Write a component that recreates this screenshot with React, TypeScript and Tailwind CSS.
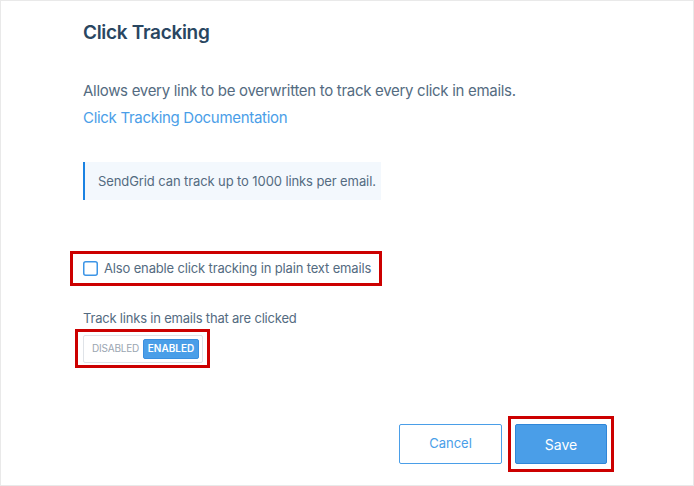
export default function App() {
  return (
    <div
      className="flex h-[486px] w-[694px] flex-col border border-[#e9e9e9] bg-white pl-[82px] text-[#546b81]"
      style={{ fontFamily: 'Inter, "Noto Sans", sans-serif' }}
    >
      <h1 className="mt-[19px] text-[19px] leading-[26px] font-semibold tracking-[-0.3px] text-[#294661]">
        Click Tracking
      </h1>

      <p className="mt-[35px] text-[15px] leading-[20px] tracking-[-0.3px]">
        Allows every link to be overwritten to track every click in emails.
      </p>
      <a className="mt-[7px] text-[15px] leading-[20px] tracking-[-0.3px] text-[#4a9ee8]" href="#">
        Click Tracking Documentation
      </a>

      <div className="mt-[34px] w-[298px] border-l-2 border-[#1a82e2] bg-[#f3f8fd] py-[10px] pl-[13px] text-[13px] leading-[18px] tracking-[-0.1px]">
        SendGrid can track up to 1000 links per email.
      </div>

      {/* checkbox, outlined in red */}
      <div className="mt-[51px] -ml-[13px] flex h-[35px] w-[312px] items-center gap-[6px] border-[3px] border-[#cc0000] pl-[10px]">
        <svg className="h-[15px] w-[15px] shrink-0" viewBox="0 0 15 15">
          <rect x="0.75" y="0.75" width="13.5" height="13.5" rx="2" fill="#fff" stroke="#3d95e6" strokeWidth="1.5" />
        </svg>
        <span className="text-[13px] leading-[17px] tracking-[-0.15px]">Also enable click tracking in plain text emails</span>
      </div>

      <p className="mt-[24px] text-[13px] leading-[17px] tracking-[-0.2px]">Track links in emails that are clicked</p>

      <div className="mt-[2px] -ml-[8px] flex h-[39px] w-[135px] items-center border-[3px] border-[#cc0000] pl-[5px]">
        <div className="flex h-[28px] w-[120px] items-center rounded-[2px] border border-[#dfe3e8] bg-white pl-[8px] pr-[3px]">
          <span className="text-[10px] tracking-[-0.2px] text-[#9aa5b1]">DISABLED</span>
          <span className="ml-auto flex h-[20px] w-[56px] items-center justify-center rounded-[2px] border border-[#3a8fdf] bg-[#4a9ee8] text-[10px] font-semibold text-white">
            ENABLED
          </span>
        </div>
      </div>

      <div className="mt-auto mb-[13px] flex items-center justify-end gap-[6px] pr-[79px]">
        <button
          type="button"
          className="h-[40px] w-[103px] rounded-[2px] border border-[#4a9ee8] bg-white text-[13px] text-[#4a9ee8]"
        >
          Cancel
        </button>
        <div className="flex h-[56px] w-[106px] items-center justify-center border-[3px] border-[#cc0000]">
          <button
            type="button"
            className="h-[40px] w-[92px] rounded-[2px] border border-[#2f86d8] bg-[#4a9ee8] text-[14px] text-white"
          >
            Save
          </button>
        </div>
      </div>
    </div>
  )
}
